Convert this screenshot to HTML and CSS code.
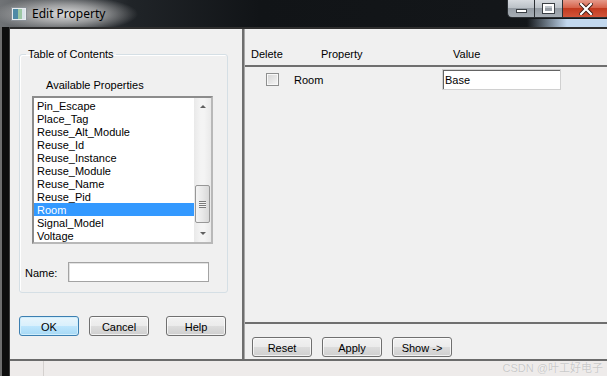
FILE: index.html
```html
<!DOCTYPE html>
<html lang="en">
<head>
    <meta charset="UTF-8">
    <title>Edit Property</title>
    <link rel="stylesheet" href="styles.css">
</head>
<body>
<div class="window">
    <div class="titlebar">
        <svg class="app-icon" width="16" height="14" viewBox="0 0 16 14">
            <rect x="0.5" y="0.5" width="15" height="13" fill="#e8ecef" stroke="#8a9096"/>
            <rect x="2" y="2" width="5" height="10" fill="#4f8aa6"/>
            <rect x="7" y="2" width="4" height="10" fill="#9cc7a4"/>
            <rect x="11" y="2" width="3" height="10" fill="#d9e3ea"/>
        </svg>
        <span class="title">Edit Property</span>
        <div class="caption-buttons">
            <div class="cap cap-min"><span class="min-bar"></span></div>
            <div class="cap cap-max"><span class="max-box"></span></div>
            <div class="cap cap-close">
                <svg width="14" height="12" viewBox="0 0 14 12">
                    <path d="M2 1 L12 11 M12 1 L2 11" stroke="#3a1a14" stroke-width="4" stroke-linecap="square"/>
                    <path d="M2 1 L12 11 M12 1 L2 11" stroke="#fff" stroke-width="2.2" stroke-linecap="square"/>
                </svg>
            </div>
        </div>
    </div>
    <div class="frame">
        <div class="frame-left"></div>
        <div class="client">
            <div class="dialog">
                <div class="left-pane">
                    <fieldset class="toc">
                        <legend>Table of Contents</legend>
                        <div class="avail-label">Available Properties</div>
                        <div class="listbox">
                            <ul class="items">
                                <li>Pin_Escape</li>
                                <li>Place_Tag</li>
                                <li>Reuse_Alt_Module</li>
                                <li>Reuse_Id</li>
                                <li>Reuse_Instance</li>
                                <li>Reuse_Module</li>
                                <li>Reuse_Name</li>
                                <li>Reuse_Pid</li>
                                <li class="selected">Room</li>
                                <li>Signal_Model</li>
                                <li>Voltage</li>
                            </ul>
                            <div class="scrollbar">
                                <div class="sb-arrow"><span class="tri-up"></span></div>
                                <div class="sb-track">
                                    <div class="sb-thumb"><span class="grip"></span></div>
                                </div>
                                <div class="sb-arrow"><span class="tri-down"></span></div>
                            </div>
                        </div>
                        <div class="name-row">
                            <label for="propName">Name:</label>
                            <input type="text" id="propName" class="field name-field">
                        </div>
                    </fieldset>
                    <div class="button-row">
                        <button class="btn btn-default">OK</button>
                        <button class="btn">Cancel</button>
                        <button class="btn btn-help">Help</button>
                    </div>
                </div>
                <div class="splitter"></div>
                <div class="right-pane">
                    <div class="grid-header">
                        <span class="col-delete">Delete</span>
                        <span class="col-property">Property</span>
                        <span class="col-value">Value</span>
                    </div>
                    <div class="grid-body">
                        <div class="grid-row">
                            <span class="checkbox"></span>
                            <span class="row-name">Room</span>
                            <input type="text" class="field value-field" value="Base">
                        </div>
                    </div>
                    <div class="right-buttons">
                        <button class="btn">Reset</button>
                        <button class="btn">Apply</button>
                        <button class="btn">Show -&gt;</button>
                    </div>
                </div>
            </div>
            <div class="statusbar">
                <div class="status-cell"></div>
                <span class="watermark">CSDN @叶工好电子</span>
            </div>
        </div>
    </div>
</div>
</body>
</html>
```

FILE: styles.css
```css
body {
    margin: 0;
    background: #000;
    font-family: "Liberation Sans", Arial, sans-serif;
    font-size: 11px;
    color: #000;
}

.window {
    width: 607px;
    height: 376px;
    display: flex;
    flex-direction: column;
    overflow: hidden;
}

/* Aero style title bar */
.titlebar {
    height: 27px;
    flex: none;
    display: flex;
    align-items: center;
    background:
        linear-gradient(90deg, rgba(190, 212, 236, 0) 0, #c2d8ee 40px) right bottom / 80px 8px no-repeat,
        radial-gradient(ellipse 72px 18px at 66px 14px, rgba(228, 228, 228, 0.95) 0, rgba(200, 200, 200, 0.65) 50%, rgba(0, 0, 0, 0) 100%),
        linear-gradient(90deg, #707376 0, #4a4e52 60px, #202428 130px, #111417 260px, #14171a 100%);
}

.app-icon {
    margin-left: 11px;
    flex: none;
}

.title {
    margin-left: 5px;
    font-family: "Noto Sans", "Open Sans", sans-serif;
    font-size: 12px;
    color: #000;
}

.caption-buttons {
    margin-left: auto;
    align-self: flex-start;
    display: flex;
    margin-right: -3px;
}

.cap {
    height: 18px;
    display: flex;
    align-items: center;
    justify-content: center;
    border: 1px solid #2c3034;
    border-top: none;
    box-sizing: border-box;
}

.cap-min {
    width: 28px;
    border-radius: 0 0 0 5px;
    background: linear-gradient(#d6dadf 0, #bcc2c8 45%, #959ca4 50%, #a6adb4 100%);
}

.cap-max {
    width: 28px;
    border-left: none;
    background: linear-gradient(#d6dadf 0, #bcc2c8 45%, #959ca4 50%, #a6adb4 100%);
}

.cap-close {
    width: 47px;
    border-left: none;
    border-radius: 0 0 5px 0;
    background: linear-gradient(#e59a8a 0, #d6634b 45%, #c23a1f 50%, #d2553a 100%);
}

.min-bar {
    width: 9px;
    height: 2px;
    margin-top: 4px;
    background: #fff;
    border: 1px solid #3a3f44;
}

.max-box {
    width: 7px;
    height: 5px;
    border: 2px solid #fff;
    outline: 1px solid #3a3f44;
}

/* window frame */
.frame {
    flex: 1;
    display: flex;
}

.frame-left {
    width: 10px;
    flex: none;
    background: linear-gradient(90deg, #6e6e6e 0 2px, #0e0e0e 2px 9px, #3c3c3c 9px);
}

.client {
    flex: 1;
    display: flex;
    flex-direction: column;
    border-top: 2px solid #2e2e2e;
}

.dialog {
    height: 330px;
    flex: none;
    display: flex;
    background: #f0f0f0;
    border-bottom: 2px solid #6b6b6b;
}

/* left side */
.left-pane {
    width: 232px;
    flex: none;
    padding-top: 18px;
    box-sizing: border-box;
}

.toc {
    margin: 0 0 0 9px;
    width: 209px;
    box-sizing: border-box;
    padding: 0 0 10px;
    border: 1px solid #d5dfe5;
    border-radius: 3px;
    box-shadow: inset 1px 1px 0 #fff;
}

.toc legend {
    margin-left: 6px;
    padding: 0 2px;
    line-height: 14px;
}

.avail-label {
    margin: 17px 0 0 26px;
    line-height: 14px;
}

.listbox {
    margin: 4px 0 0 12px;
    width: 181px;
    height: 148px;
    box-sizing: border-box;
    border: 2px solid #a0a0a0;
    border-color: #8c8c8c #b8b8b8 #b8b8b8 #8c8c8c;
    background: #fff;
    display: flex;
}

.items {
    list-style: none;
    margin: 0;
    padding: 1px 0 0;
    width: 160px;
}

.items li {
    height: 13px;
    line-height: 14px;
    padding-left: 3px;
    white-space: nowrap;
}

.items li.selected {
    background: #3399ff;
    color: #fff;
}

.scrollbar {
    width: 17px;
    display: flex;
    flex-direction: column;
    background: linear-gradient(90deg, #e9e9e9, #f4f4f4 40%, #f4f4f4 60%, #e9e9e9);
}

.sb-arrow {
    height: 17px;
    display: flex;
    align-items: center;
    justify-content: center;
}

.tri-up {
    width: 0;
    height: 0;
    border-left: 3px solid transparent;
    border-right: 3px solid transparent;
    border-bottom: 3px solid #606060;
}

.tri-down {
    width: 0;
    height: 0;
    border-left: 3px solid transparent;
    border-right: 3px solid transparent;
    border-top: 3px solid #606060;
}

.sb-track {
    flex: 1;
}

.sb-thumb {
    margin: 70px 0 0 1px;
    width: 15px;
    height: 38px;
    box-sizing: border-box;
    border: 1px solid #979797;
    border-radius: 2px;
    background: linear-gradient(90deg, #f4f4f4, #e8e8e8 50%, #d8d8d8);
    display: flex;
    align-items: center;
    justify-content: center;
}

.grip {
    width: 7px;
    height: 7px;
    background: repeating-linear-gradient(#7a7a7a 0 1px, #f4f4f4 1px 2px);
}

.name-row {
    margin: 18px 0 0 5px;
    display: flex;
    align-items: center;
}

.name-row label {
    width: 43px;
    padding-top: 1px;
}

.field {
    box-sizing: border-box;
    margin: 0;
    padding: 0 2px;
    background: #fff;
    font-family: "Liberation Sans", Arial, sans-serif;
    font-size: 11px;
    outline: none;
}

.name-field {
    width: 141px;
    height: 20px;
    border: 1px solid #a3a3a3;
    box-shadow: inset 1px 1px 0 #e2e2e2;
}

.button-row {
    margin: 23px 0 0 9px;
    display: flex;
    gap: 10px;
}

.btn {
    width: 60px;
    height: 20px;
    padding: 1px 0 0;
    border: 1px solid #707070;
    border-radius: 3px;
    background: linear-gradient(#f2f2f2 0, #ebebeb 50%, #dddddd 50%, #cfcfcf 100%);
    box-shadow: inset 0 0 0 1px rgba(255, 255, 255, 0.7);
    font-family: "Liberation Sans", Arial, sans-serif;
    font-size: 11px;
    color: #000;
}

.btn-default {
    border-color: #3c7fb1;
    background: linear-gradient(#e8f5fc 0, #d9f0fc 50%, #bee6fd 50%, #a7d9f5 100%);
    box-shadow: inset 0 0 0 1px #d0eefc;
}

.btn-help {
    margin-left: 7px;
}

/* splitter */
.splitter {
    width: 2px;
    flex: none;
    background: #6e6e6e;
}

/* right side */
.right-pane {
    flex: 1;
    display: flex;
    flex-direction: column;
    border-left: 1px solid #a8a8a8;
}

.grid-header {
    height: 38px;
    flex: none;
    box-sizing: border-box;
    padding: 19px 0 0 6px;
    line-height: 13px;
    display: flex;
    border-bottom: 2px solid #6f6f6f;
}

.col-delete {
    width: 70px;
}

.col-property {
    width: 132px;
}

.grid-body {
    flex: 1;
    padding-top: 2px;
    border-bottom: 2px solid #6f6f6f;
}

.grid-row {
    display: flex;
    align-items: center;
    height: 21px;
}

.checkbox {
    margin-left: 21px;
    width: 13px;
    height: 13px;
    box-sizing: border-box;
    border: 1px solid #8e8f8f;
    background: linear-gradient(135deg, #d4d4d4, #f6f6f6);
    box-shadow: inset 0 0 0 1px #f8f8f8;
}

.row-name {
    margin-left: 15px;
    width: 148px;
    padding-top: 1px;
}

.value-field {
    width: 119px;
    height: 21px;
    border: 1px solid #d0d0d0;
    box-shadow: inset 1px 1px 0 #646464;
}

.right-buttons {
    height: 35px;
    flex: none;
    box-sizing: border-box;
    padding: 13px 0 0 7px;
    display: flex;
    gap: 10px;
}

/* status strip below the dialog */
.statusbar {
    flex: 1;
    display: flex;
    align-items: center;
    background: #eeebea;
}

.status-cell {
    width: 33px;
    height: 100%;
    border-right: 1px solid #d4d0ce;
}

.watermark {
    margin-left: auto;
    margin-right: 4px;
    font-family: "Liberation Sans", "Noto Sans CJK SC", sans-serif;
    font-size: 11px;
    line-height: 13px;
    color: #c9c9c9;
    text-shadow: 0 0 1px #fff;
}
```
